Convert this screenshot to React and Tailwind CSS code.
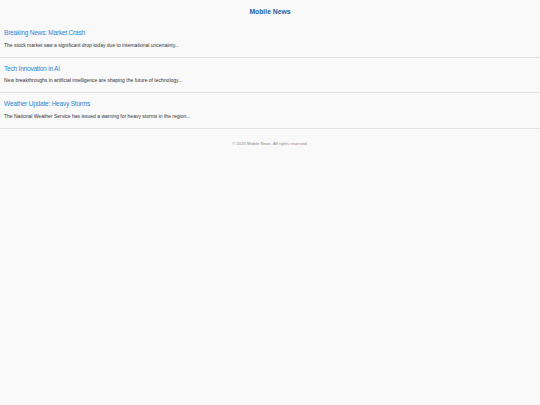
import React from 'react';

const articles = [
  {
    title: 'Breaking News: Market Crash',
    summary: 'The stock market saw a significant drop today due to international uncertainty...',
  },
  {
    title: 'Tech Innovation in AI',
    summary: 'New breakthroughs in artificial intelligence are shaping the future of technology...',
  },
  {
    title: 'Weather Update: Heavy Storms',
    summary: 'The National Weather Service has issued a warning for heavy storms in the region...',
  },
];

const App = () => {
  return (
    <div className="min-h-[405px] w-full bg-[#f9f9f9] font-['Liberation_Sans',Arial,sans-serif]">
      {/* Header */}
      <header className="h-[22px] flex items-center justify-center pt-[2px]">
        <h1 className="text-[6.8px] leading-[10px] font-bold text-[#1f5f9e]">Mobile News</h1>
      </header>

      {/* Articles */}
      <main>
        {articles.map((a) => (
          <article key={a.title} className="px-[4px] pt-[7px] pb-[9px] border-b border-[#e2e2e2]">
            <h2 className="text-[6.5px] leading-[8px] tracking-[-0.2px] text-[#2b86d4] mb-[4.5px]">{a.title}</h2>
            <p className="text-[5px] leading-[6px] text-[#333]">{a.summary}</p>
          </article>
        ))}
      </main>

      {/* Footer */}
      <footer className="pt-[12px] text-center">
        <p className="text-[4.2px] leading-[5px] text-[#888]">© 2025 Mobile News. All rights reserved.</p>
      </footer>
    </div>
  );
};

export default App;
